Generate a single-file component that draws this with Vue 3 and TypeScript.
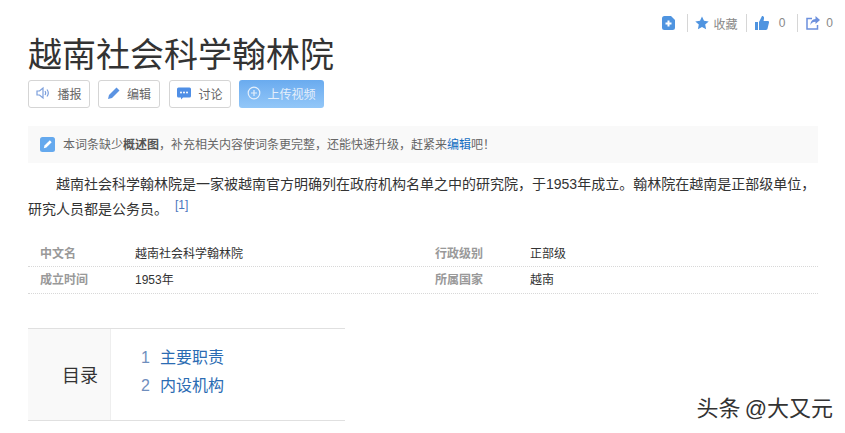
<script setup lang="ts">
interface Fact { label: string; value: string }
const rows: Fact[][] = [
  [{ label: '中文名', value: '越南社会科学翰林院' }, { label: '行政级别', value: '正部级' }],
  [{ label: '成立时间', value: '1953年' }, { label: '所属国家', value: '越南' }],
]
const toc = ['主要职责', '内设机构']
</script>

<template>
  <div class="page">
    <div class="tools">
      <svg class="ico plus" viewBox="0 0 14 14" width="14" height="14"><path d="M2.500 0H9l4 4v7.500A2.500 2.500 0 0 1 10.500 14h-8A2.500 2.500 0 0 1 0 11.500v-9A2.500 2.500 0 0 1 2.500 0z" fill="#4f94e0"/><path d="M5.500 4.500h2v2h2v2h-2v2h-2v-2h-2v-2h2z" fill="#fff"/></svg>
      <span class="sep first"></span>
      <svg class="ico star" viewBox="0 0 14 14" width="14" height="14"><path d="M7 .5l2 4.300 4.700.6-3.500 3.200.9 4.700L7 11l-4.100 2.300.9-4.700L.3 5.400 5 4.800z" fill="#4f94e0"/></svg>
      <span class="tool-text fav">收藏</span>
      <span class="sep"></span>
      <svg class="ico" viewBox="0 0 14 14" width="14" height="14"><path d="M0 6h3v8H0zM4 6l3-6c1.500 0 2.300 1 2 2.500L8.600 5H13c.8 0 1.200.7 1 1.500l-1.500 6.300c-.2.700-.7 1.200-1.500 1.200H4z" fill="#4f94e0"/></svg>
      <span class="tool-text num">0</span>
      <span class="sep"></span>
      <svg class="ico" viewBox="0 0 14 14" width="14" height="14"><path d="M6 2.500H1v10.500h10.500V9" fill="none" stroke="#6c90dd" stroke-width="1.500"/><path d="M9.500 0L14 4l-4.500 4V5.700C7 5.700 5.500 6.800 4.500 9c0-3.600 2-5.800 5-6z" fill="#6c90dd"/></svg>
      <span class="tool-text num share">0</span>
    </div>

    <h1 class="title">越南社会科学翰林院</h1>

    <div class="actions">
      <button class="btn report">
        <svg viewBox="0 0 14 14" width="14" height="14"><path d="M1 5h2.500L7 2v10L3.500 9H1z" fill="none" stroke="#7c9fdc" stroke-width="1.200"/><path d="M9 5c.8 1.200.8 2.800 0 4M11 3.500c1.500 2 1.500 5 0 7" fill="none" stroke="#7c9fdc" stroke-width="1.200"/></svg>
        <span>播报</span>
      </button>
      <button class="btn edit">
        <svg viewBox="0 0 14 14" width="14" height="14"><path d="M9.500 1.500l3 3L5 12l-4 1 1-4z" fill="#5b93e2"/></svg>
        <span>编辑</span>
      </button>
      <button class="btn discuss">
        <svg viewBox="0 0 14 14" width="14" height="14"><path d="M1.500 1.500h11A1.500 1.500 0 0 1 14 3v7a1.500 1.500 0 0 1-1.500 1.500H6L4 13.500v-2H1.500A1.500 1.500 0 0 1 0 10V3a1.500 1.500 0 0 1 1.500-1.500z" fill="#4f8fe6"/><circle cx="4" cy="6.500" r="1" fill="#fff"/><circle cx="7" cy="6.500" r="1" fill="#fff"/><circle cx="10" cy="6.500" r="1" fill="#fff"/></svg>
        <span>讨论</span>
      </button>
      <button class="btn upload">
        <svg viewBox="0 0 14 14" width="14" height="14"><circle cx="7" cy="7" r="5.800" fill="none" stroke="#e4effb" stroke-width="1.200"/><path d="M7 4v6M4 7h6" stroke="#e4effb" stroke-width="1.200"/></svg>
        <span>上传视频</span>
      </button>
    </div>

    <div class="notice">
      <svg class="notice-ico" viewBox="0 0 15 15" width="15" height="15"><rect width="15" height="15" rx="2.500" fill="#65a9ee"/><path d="M9.800 3.300l1.900 1.900-5.300 5.300-2.600.7.700-2.600z" fill="#fff"/></svg>
      <p>本词条缺少<b>概述图</b>，补充相关内容使词条更完整，还能快速升级，赶紧来<a>编辑</a>吧！</p>
    </div>

    <p class="intro">越南社会科学翰林院是一家被越南官方明确列在政府机构名单之中的研究院，于1953年成立。翰林院在越南是正部级单位，研究人员都是公务员。 <sup>[1]</sup></p>

    <div class="facts">
      <div v-for="(row, i) in rows" :key="i" class="fact-row">
        <template v-for="f in row" :key="f.label">
          <span class="fact-label">{{ f.label }}</span>
          <span class="fact-value">{{ f.value }}</span>
        </template>
      </div>
    </div>

    <div class="toc">
      <div class="toc-head">目录</div>
      <ol class="toc-list">
        <li v-for="(item, i) in toc" :key="item"><span class="toc-num">{{ i + 1 }}</span><a>{{ item }}</a></li>
      </ol>
    </div>

    <div class="mark">头条 @大又元</div>
  </div>
</template>

<style>
html, body { background: #fff; overflow: hidden; }
</style>

<style scoped>
.page {
  position: relative;
  width: 845px;
  height: 433px;
  box-sizing: border-box;
  padding: 15px 27px 0 28px;
  overflow: hidden;
  font-family: "Liberation Sans", "Noto Sans CJK SC", sans-serif;
  color: #333;
  font-size: 12px;
}
.tools { display: flex; align-items: center; justify-content: flex-end; height: 16px; margin-right: -15px; }
.ico { display: block; }
.sep { width: 1px; height: 18px; background: #d6d6d6; margin: 0 8px 0 8px; }
.sep.first { margin-left: 11px; margin-right: 7px; }
.tool-text { color: #888; font-size: 12px; }
.fav { margin-left: 5px; }
.num { margin-left: 10px; margin-right: 4px; }
.share { margin-left: 6px; margin-right: 0; }
.title {
  margin: 0;
  padding-top: 2px;
  font-size: 34px;
  line-height: 44px;
  font-weight: 400;
  color: #333;
}
.actions { display: flex; gap: 8px; margin-top: 3px; }
.btn {
  display: flex;
  align-items: center;
  justify-content: center;
  gap: 7px;
  width: 62px;
  height: 28px;
  padding: 0 0 2px;
  border: 1px solid #d5d5d5;
  border-radius: 3px;
  background: #fff;
  color: #666;
  font: 12px "Liberation Sans", "Noto Sans CJK SC", sans-serif;
}
.btn.edit { gap: 6px; }
.btn.discuss { margin-left: 1px; }
.btn.upload {
  width: 85px;
  border: 0;
  background: linear-gradient(#6aabef, #93c7f8);
  color: #e4effb;
  gap: 6px;
}
.notice {
  display: flex;
  align-items: center;
  gap: 8px;
  height: 37px;
  margin-top: 18px;
  padding-left: 12px;
  background: #f9f9f9;
  color: #666;
}
.notice p { margin: 0 0 3px; }
.notice b { font-weight: 700; color: #555; }
.notice a { color: #136ec2; }
.intro {
  margin: 9px 0 0;
  font-size: 14px;
  line-height: 25px;
  text-indent: 28px;
  color: #333;
}
.intro sup { font-size: 12px; line-height: 0; color: #4a76bd; margin-left: 3px; vertical-align: 5px; }
.facts { margin-top: 19px; }
.fact-row {
  display: grid;
  grid-template-columns: 95px 300px 95px 1fr;
  padding-left: 12px;
  height: 26px;
  line-height: 26px;
  border-bottom: 1px dotted #d8d8d8;
}
.fact-row:first-child { height: 25px; }
.fact-label { color: #999; font-weight: 700; }
.fact-value { color: #333; }
.toc {
  display: flex;
  width: 317px;
  height: 91px;
  margin-top: 34px;
  border-top: 1px solid #e0e0e0;
  border-bottom: 1px solid #e0e0e0;
}
.toc-head {
  box-sizing: border-box;
  width: 83px;
  padding: 35px 12px 0 0;
  text-align: right;
  font-size: 18px;
  line-height: 24px;
  background: #f9f9f9;
  border-right: 1px solid #eee;
}
.toc-list { margin: 0; padding: 15px 0 0 30px; list-style: none; font-size: 16px; line-height: 28px; }
.toc-list li { display: flex; }
.toc-num { width: 19px; color: #6f8ebd; }
.toc-list a { color: #2b6cb3; }
.mark {
  position: absolute;
  right: 12px;
  top: 395px;
  font-size: 22px;
  line-height: 28px;
  word-spacing: -2px;
  color: #333;
  text-shadow: 0 0 1px #fff;
}
</style>
